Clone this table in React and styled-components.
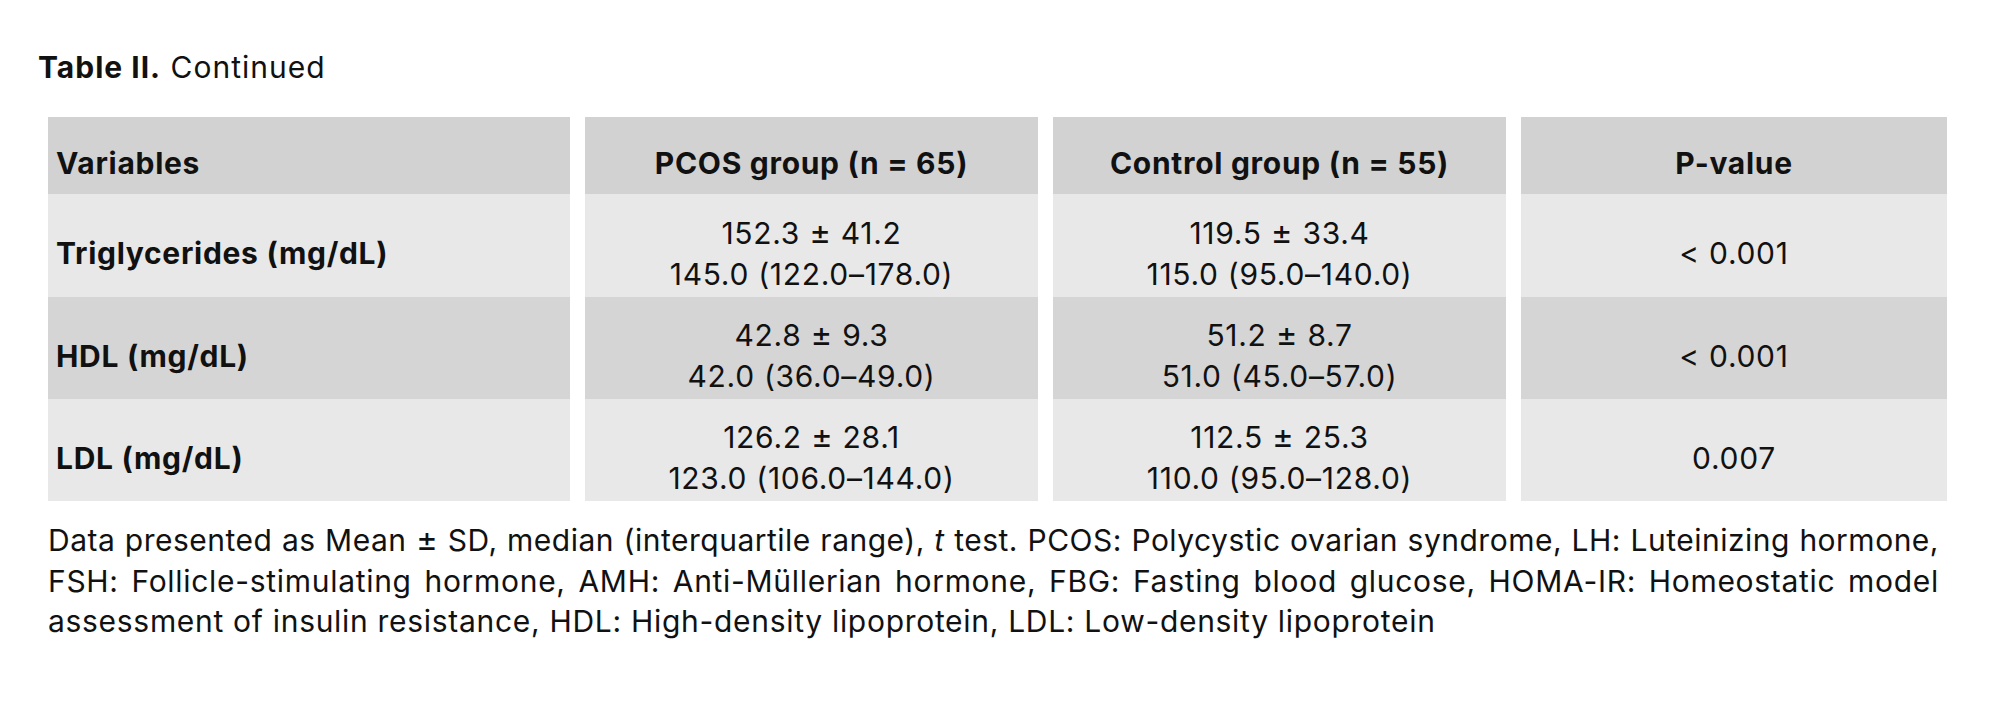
import React from 'react';
import styled, { createGlobalStyle } from 'styled-components';

const GlobalStyle = createGlobalStyle`
  body {
    margin: 0;
    background: #ffffff;
    color: #111111;
    font-family: Inter, "Noto Sans", sans-serif;
  }
`;

const Page = styled.div`
  padding: 47px 53px 0 48px;
  font-size: 30px;
  letter-spacing: 0.7px;
`;

const Caption = styled.div`
  margin-left: -10px;
  line-height: 40px;
  margin-bottom: 30px;
  letter-spacing: 1px;

  strong {
    font-weight: 700;
  }
`;

const Grid = styled.div`
  display: grid;
  grid-template-columns: 522px 453px 453px 426px;
  grid-template-rows: 77px 103px 102px 102px;
  column-gap: 15px;
`;

const Cell = styled.div`
  display: flex;
  flex-direction: column;
  justify-content: center;
  align-items: ${(p) => (p.$left ? 'flex-start' : 'center')};
  text-align: ${(p) => (p.$left ? 'left' : 'center')};
  padding: 16px 8px 0;
  line-height: 41px;
  font-weight: ${(p) => (p.$bold ? 700 : 400)};
  background: ${(p) => p.$bg};
`;

const PM = styled.span`
  font-size: 1.1em;
  line-height: 0;
`;

const Notes = styled.div`
  margin: 19px 8px 0 0;
  line-height: 40.5px;
`;

const NoteLine = styled.div`
  text-align: justify;
  text-align-last: ${(p) => (p.$last ? 'left' : 'justify')};
  letter-spacing: ${(p) => (p.$tight ? '0.5px' : '0.7px')};
  white-space: nowrap;
`;

const headers = ['Variables', 'PCOS group (n = 65)', 'Control group (n = 55)', 'P-value'];

const rows = [
  {
    name: 'Triglycerides (mg/dL)',
    pcos: [['152.3', '41.2'], '145.0 (122.0–178.0)'],
    control: [['119.5', '33.4'], '115.0 (95.0–140.0)'],
    p: '< 0.001',
  },
  {
    name: 'HDL (mg/dL)',
    pcos: [['42.8', '9.3'], '42.0 (36.0–49.0)'],
    control: [['51.2', '8.7'], '51.0 (45.0–57.0)'],
    p: '< 0.001',
  },
  {
    name: 'LDL (mg/dL)',
    pcos: [['126.2', '28.1'], '123.0 (106.0–144.0)'],
    control: [['112.5', '25.3'], '110.0 (95.0–128.0)'],
    p: '0.007',
  },
];

const HEAD_BG = '#d2d2d2';
const rowBg = (i) => (i % 2 === 0 ? '#e8e8e8' : '#d5d5d5');

const ValueCell = ({ value, bg }) => (
  <Cell $bg={bg}>
    <span>
      {value[0][0]} <PM>±</PM> {value[0][1]}
    </span>
    <span>{value[1]}</span>
  </Cell>
);

export default function App() {
  return (
    <Page>
      <GlobalStyle />
      <Caption>
        <strong>Table II.</strong> Continued
      </Caption>
      <Grid>
        {headers.map((h, i) => (
          <Cell key={h} $bold $left={i === 0} $bg={HEAD_BG}>
            {h}
          </Cell>
        ))}
        {rows.map((r, i) => (
          <React.Fragment key={r.name}>
            <Cell $bold $left $bg={rowBg(i)}>{r.name}</Cell>
            <ValueCell value={r.pcos} bg={rowBg(i)} />
            <ValueCell value={r.control} bg={rowBg(i)} />
            <Cell $bg={rowBg(i)}>{r.p}</Cell>
          </React.Fragment>
        ))}
      </Grid>
      <Notes>
        <NoteLine $tight>
          Data presented as Mean <PM>±</PM> SD, median (interquartile range), <i>t</i> test. PCOS: Polycystic ovarian syndrome, LH: Luteinizing hormone,
        </NoteLine>
        <NoteLine>
          FSH: Follicle-stimulating hormone, AMH: Anti-Müllerian hormone, FBG: Fasting blood glucose, HOMA-IR: Homeostatic model
        </NoteLine>
        <NoteLine $last>
          assessment of insulin resistance, HDL: High-density lipoprotein, LDL: Low-density lipoprotein
        </NoteLine>
      </Notes>
    </Page>
  );
}
